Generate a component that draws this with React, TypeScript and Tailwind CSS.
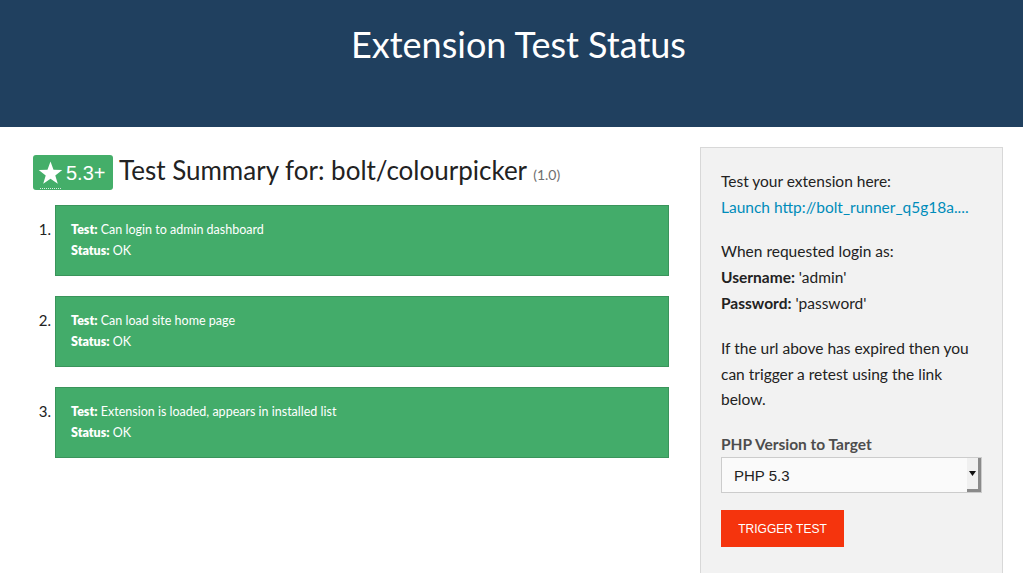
import React from "react";

const tests = [
  "Can login to admin dashboard",
  "Can load site home page",
  "Extension is loaded, appears in installed list",
];

function Star() {
  return (
    <svg width="25" height="24" viewBox="0 0 24 23" className="block">
      <polygon
        points="12,0.5 14.9,8.4 23.3,8.6 16.6,13.8 19,21.9 12,17.1 5,21.9 7.4,13.8 0.7,8.6 9.1,8.4"
        fill="#ffffff"
      />
    </svg>
  );
}

export default function App() {
  const sans = { fontFamily: "Lato, 'Open Sans', sans-serif" };
  return (
    <div className="min-h-[573px] bg-white text-[#222222]" style={sans}>
      <header className="h-[127px] bg-[#20405f] flex justify-center pt-[21px]">
        <h1 className="text-[36px] leading-[46px] text-white font-normal ml-[14px]">
          Extension Test Status
        </h1>
      </header>
      <main className="flex pl-[33px] pr-[20px] pt-[20px] gap-[31px]">
        <section className="w-[636px] shrink-0">
          <div className="flex items-center mt-[6px]">
            <div className="h-[35px] w-[80px] rounded-[3px] bg-[#44ae69] flex items-center pl-[5px] gap-[3px]">
              <div className="relative">
                <Star />
                <div className="absolute left-[2px] right-[2px] top-[27px] border-b border-dotted border-white/80" />
              </div>
              <span className="text-white text-[20px] leading-none" style={{ fontFamily: "'Liberation Sans', Arial, sans-serif" }}>
                5.3+
              </span>
            </div>
            <h2 className="ml-[6px] text-[26px] leading-[34px] text-[#222222]">
              Test Summary for: bolt/colourpicker{" "}
              <span className="text-[14px] text-[#6f6f6f]">(1.0)</span>
            </h2>
          </div>
          <ol className="mt-[13px] flex flex-col gap-[20px]">
            {tests.map((t, i) => (
              <li key={i} className="flex">
                <span className="w-[22px] shrink-0 text-right pr-[4px] pt-[14px] text-[15px] leading-[20px] text-[#222222]">
                  {i + 1}.
                </span>
                <div className="flex-1 h-[71px] bg-[#43ac6a] border border-[#3a945b] pl-[15px] pt-[13px] text-white text-[12.5px] leading-[21px]">
                  <div>
                    <b className="font-extrabold">Test:</b> {t}
                  </div>
                  <div>
                    <b className="font-extrabold">Status:</b> OK
                  </div>
                </div>
              </li>
            ))}
          </ol>
        </section>
        <aside className="w-[303px] shrink-0 h-[440px] bg-[#f2f2f2] border border-[#d8d8d8] pl-[20px] pt-[20px] text-[15.5px] leading-[26px] text-[#222222]">
          <p>Test your extension here:</p>
          <p className="text-[#008cba]">Launch http://bolt_runner_q5g18a....</p>
          <p className="mt-[18px]">When requested login as:</p>
          <p>
            <b className="font-bold">Username:</b> 'admin'
          </p>
          <p>
            <b className="font-bold">Password:</b> 'password'
          </p>
          <p className="mt-[20px] w-[260px] leading-[25.5px]">
            If the url above has expired then you can trigger a retest using the link below.
          </p>
          <label className="block mt-[20px] font-bold text-[#4d4d4d] leading-[22px]">PHP Version to Target</label>
          <div className="mt-[2px] w-[261px] h-[36px] border border-[#cccccc] bg-[#fafafa] flex items-center justify-between">
            <span className="pl-[12px] pt-[2px] text-[15px] text-[#222222]" style={{ fontFamily: "'Liberation Sans', Arial, sans-serif" }}>
              PHP 5.3
            </span>
            <div className="h-[34px] w-[14px] bg-[#f0f0f0] border-r-[3px] border-b-[3px] border-[#8a8a8a] flex items-center justify-center">
              <svg width="7" height="5" viewBox="0 0 7 5">
                <polygon points="0,0 7,0 3.5,5" fill="#111" />
              </svg>
            </div>
          </div>
          <button
            className="mt-[17px] w-[123px] h-[37px] bg-[#f5340d] text-white text-[12px] flex items-center justify-center pt-[2px]"
            style={{ fontFamily: "'Liberation Sans', Arial, sans-serif" }}
          >
            TRIGGER TEST
          </button>
        </aside>
      </main>
    </div>
  );
}
